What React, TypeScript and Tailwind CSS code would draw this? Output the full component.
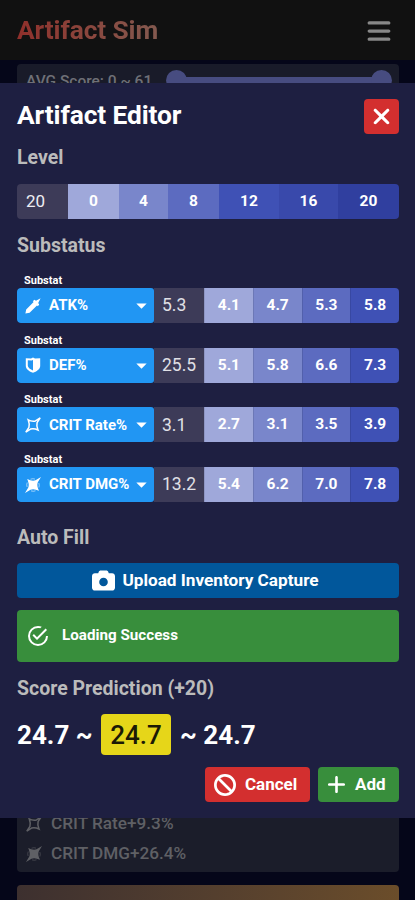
import { FaBan, FaBars, FaCamera, FaPlus, FaXmark } from "react-icons/fa6";
import { MdArrowDropDown } from "react-icons/md";

const SHADES = [
  "bg-[#9fa8da]",
  "bg-[#7986cb]",
  "bg-[#5c6bc0]",
  "bg-[#3f51b5]",
  "bg-[#3949ab]",
  "bg-[#303f9f]",
];

const LEVELS = [
  { value: 0, width: "w-[51px]" },
  { value: 4, width: "w-[49px]" },
  { value: 8, width: "w-[51px]" },
  { value: 12, width: "w-[60px]" },
  { value: 16, width: "w-[59px]" },
  { value: 20, width: "w-[61px]" },
];

type StatIcon = (props: { className?: string }) => React.ReactNode;

interface Substat {
  name: string;
  icon: StatIcon;
  value: string;
  rolls: string[];
}

const AtkIcon: StatIcon = ({ className }) => (
  <svg viewBox="0 0 16 16" className={className} fill="currentColor">
    <path d="M.4 15.6 1.2 11.4 8.6 4 7.8 3.2 9.4 1.8 11 2.8 15.6.3 13.2 5 14.2 6.6 12.9 8.2 12 7.4 4.6 14.8Z" />
  </svg>
);

const DefIcon: StatIcon = ({ className }) => (
  <svg viewBox="0 0 16 16" className={className} fill="currentColor">
    <path
      fillRule="evenodd"
      d="M8 .4 10 1.4 15.2 1.2V9C15.2 12 11.5 14.6 8 15.8 4.5 14.6.8 12 .8 9V1.2L6 1.4ZM8 3 6.6 3.5 2.8 3.3V8.8C2.8 10.6 5.5 12.5 8 13.5Z"
    />
  </svg>
);

const CritRateIcon: StatIcon = ({ className }) => (
  <svg viewBox="0 0 16 16" className={className} fill="none" stroke="currentColor" strokeWidth="1.5">
    <path d="M3.2 2.8Q7 4.8 10.5 3.9L15.2.8 12.1 5.5Q11.2 9 13 13 9 11.2 5.5 12.1L.8 15.2 3.9 10.5Q4.8 7 3.2 2.8Z" />
  </svg>
);

const CritDmgIcon: StatIcon = ({ className }) => (
  <svg viewBox="0 0 16 16" className={className} fill="currentColor">
    <path d="M2.2 2Q7 4.5 10.5 3.3L16 0 12.7 5.5Q11.5 9 14 13.8 9 11.5 5.5 12.7L0 16 3.3 10.5Q4.5 7 2.2 2Z" />
    <path
      d="M5.5 2.2Q8 1.3 10 2.1M6 13.9Q8.5 14.7 10.5 13.8M2.2 5.5Q1.3 8 2.1 10M13.8 6Q14.7 8 13.9 10.5"
      fill="none"
      stroke="currentColor"
      strokeWidth=".8"
      opacity=".7"
    />
  </svg>
);

const SUBSTATS: Substat[] = [
  { name: "ATK%", icon: AtkIcon, value: "5.3", rolls: ["4.1", "4.7", "5.3", "5.8"] },
  { name: "DEF%", icon: DefIcon, value: "25.5", rolls: ["5.1", "5.8", "6.6", "7.3"] },
  { name: "CRIT Rate%", icon: CritRateIcon, value: "3.1", rolls: ["2.7", "3.1", "3.5", "3.9"] },
  { name: "CRIT DMG%", icon: CritDmgIcon, value: "13.2", rolls: ["5.4", "6.2", "7.0", "7.8"] },
];

function SectionTitle({ children }: { children: React.ReactNode }) {
  return <h3 className="h-6 pt-px text-[19.5px] leading-6 font-bold text-[#bbbbbb]">{children}</h3>;
}

function SubstatRow({ stat }: { stat: Substat }) {
  const Icon = stat.icon;
  return (
    <div className="h-[59.7px]">
      <div className="h-4 pt-px pl-[7px] text-[11px] leading-4 font-bold text-white">Substat</div>
      <div className="flex h-[35px] overflow-hidden rounded-[4px]">
        <button className="flex w-[137px] shrink-0 items-center rounded-[3px] bg-[#2196f3] pl-[8px] text-[15px] font-bold whitespace-nowrap text-white">
          <Icon className="mr-[8px] size-4 shrink-0" />
          <span className="min-w-0 flex-1 text-left">{stat.name}</span>
          <MdArrowDropDown className="size-[25px] shrink-0" />
        </button>
        <div className="flex w-[50px] shrink-0 items-center bg-[#3d3b58] pl-[8px] text-[17.5px] text-[#e0e0e6]">
          {stat.value}
        </div>
        {stat.rolls.map((roll, i) => (
          <button
            key={i}
            className={`flex flex-1 items-center justify-center border-l border-black/10 text-[15.5px] font-bold text-white ${SHADES[i]}`}
          >
            {roll}
          </button>
        ))}
      </div>
    </div>
  );
}

function ArtifactEditor() {
  return (
    <div className="absolute inset-x-0 top-[83px] h-[735px] bg-[#1e1f41] px-[17px] pt-4">
      <div className="-mr-px flex h-[35px] items-center justify-between">
        <h2 className="pb-[2px] text-[26.3px] font-bold tracking-[-0.1px] text-white">Artifact Editor</h2>
        <button className="flex size-[35px] items-center justify-center rounded-[4px] bg-[#d32f2f] text-white">
          <FaXmark className="size-[25px]" />
        </button>
      </div>

      <div className="mt-[11px]">
        <SectionTitle>Level</SectionTitle>
      </div>
      <div className="mt-[15px] -mr-px flex h-[35px] overflow-hidden rounded-[4px]">
        <div className="flex w-[51px] items-center bg-[#3d3b58] pl-[9px] text-[17px] text-[#ededf2]">20</div>
        {LEVELS.map((level, i) => (
          <button
            key={level.value}
            className={`flex items-center justify-center text-[15.5px] font-bold text-white ${level.width} ${SHADES[i]}`}
          >
            {level.value}
          </button>
        ))}
      </div>

      <div className="mt-[14px]">
        <SectionTitle>Substatus</SectionTitle>
      </div>
      <div className="mt-[15px] -mr-px h-[253px]">
        {SUBSTATS.map((stat) => (
          <SubstatRow key={stat.name} stat={stat} />
        ))}
      </div>

      <SectionTitle>Auto Fill</SectionTitle>
      <div className="-mr-px">
        <button className="mt-[14px] flex h-[35px] w-full items-center justify-center gap-[7px] rounded-[4px] bg-[#01579b] pr-[5px] text-[17.2px] font-bold text-white">
          <FaCamera className="size-[23px]" />
          Upload Inventory Capture
        </button>
        <div className="mt-[12px] flex h-[52px] items-center rounded-[4px] bg-[#388e3c] pb-px pl-[9px] text-[15.2px] font-bold text-white">
          <svg viewBox="0 0 24 24" className="mr-[12px] size-6" fill="currentColor">
            <path d="M20,12A8,8 0 0,1 12,20A8,8 0 0,1 4,12A8,8 0 0,1 12,4C12.76,4 13.5,4.11 14.2,4.31L15.77,2.74C14.61,2.26 13.34,2 12,2A10,10 0 0,0 2,12A10,10 0 0,0 12,22A10,10 0 0,0 22,12M7.91,10.08L6.5,11.5L11,16L21,6L19.59,4.58L11,13.17L7.91,10.08Z" />
          </svg>
          Loading Success
        </div>
      </div>

      <div className="mt-[14px]">
        <SectionTitle>Score Prediction (+20)</SectionTitle>
      </div>
      <div className="mt-[14px] flex h-[41px] items-center text-[26px] font-bold text-white">
        <span className="w-[76px] pt-px whitespace-nowrap">24.7 ~</span>
        <span className="mr-[9px] ml-2 flex h-[41px] w-[70px] items-center justify-center rounded-[4px] bg-[#e6d619] pt-px font-medium text-[#1c1a05]">
          24.7
        </span>
        <span className="pt-px">~ 24.7</span>
      </div>

      <div className="mt-[12px] flex justify-end gap-[8px] text-[17px] font-bold text-white">
        <button className="flex h-[35px] w-[105px] items-center gap-[9px] rounded-[4px] bg-[#d32f2f] pl-[9px]">
          <FaBan className="size-[22px]" />
          Cancel
        </button>
        <button className="-mr-px flex h-[35px] w-[81px] items-center gap-[8px] rounded-[4px] bg-[#388e3c] pl-[8px]">
          <FaPlus className="size-[21px]" />
          Add
        </button>
      </div>
    </div>
  );
}

export default function App() {
  return (
    <div className="relative flex h-[900px] w-[415px] flex-col overflow-hidden bg-[#050619] font-['Roboto',sans-serif]">
      <header className="flex h-[60px] shrink-0 items-center justify-between bg-[#111111] pt-[2px] pr-[23px] pl-[17px]">
        <h1 className="bg-linear-to-r from-[#8f2f2b] to-[#83594f] bg-clip-text text-[26.3px] font-bold tracking-[-0.1px] text-transparent">
          Artifact Sim
        </h1>
        <FaBars className="size-[26px] text-[#888888]" />
      </header>

      <main className="flex flex-1 flex-col pt-1 pr-[16px] pl-[17px]">
        <div className="flex h-[40px] shrink-0 items-start rounded-[4px] bg-[#191b29] pt-[6px] pl-[9px] text-[15.5px] text-[#6f7077]">
          <span className="w-[140px] leading-[22px] font-medium whitespace-nowrap">AVG Score: 0 ~ 61</span>
          <div className="flex h-5 w-[226px] items-center justify-between">
            <span className="size-[21px] shrink-0 rounded-full bg-[#474c80]" />
            <span className="-mx-1 h-[6px] flex-1 bg-[#474c80]" />
            <span className="size-[21px] shrink-0 rounded-full bg-[#474c80]" />
          </div>
        </div>

        <div className="mt-auto flex h-[130px] shrink-0 flex-col justify-end rounded-[4px] bg-[#1b1d2a] px-[9px] pb-[3px] text-[17.2px] font-medium text-[#5f6065]">
          <div className="flex h-[30px] items-center gap-[9px]">
            <CritRateIcon className="size-4" />
            CRIT Rate+9.3%
          </div>
          <div className="flex h-[30px] items-center gap-[9px]">
            <CritDmgIcon className="size-4" />
            CRIT DMG+26.4%
          </div>
        </div>
        <div className="mt-[13px] h-[15px] shrink-0 rounded-t-[4px] bg-linear-to-r from-[#3d302f] to-[#6b4d2a]" />
      </main>

      <ArtifactEditor />
    </div>
  );
}
